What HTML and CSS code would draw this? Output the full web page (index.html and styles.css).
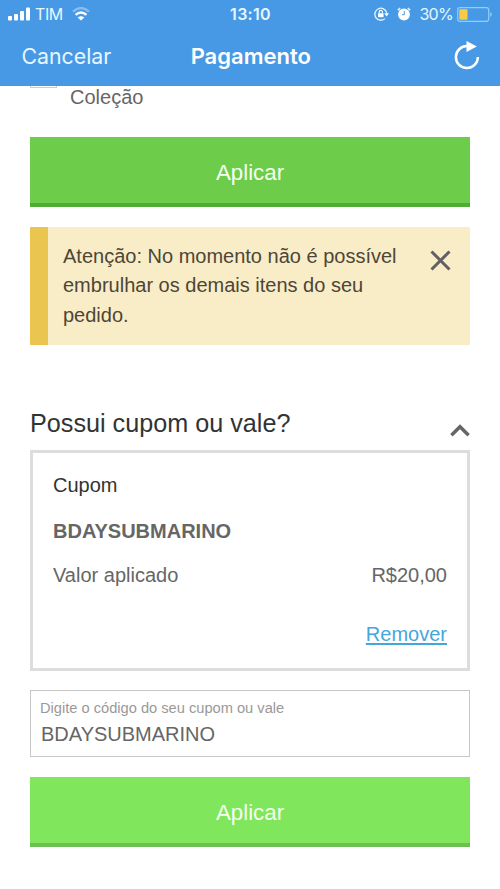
FILE: index.html
```html
<!DOCTYPE html>
<html lang="pt-BR">
<head>
<meta charset="utf-8">
<meta name="viewport" content="width=device-width">
<title>Pagamento</title>
<link rel="stylesheet" href="styles.css">
</head>
<body>
<header class="header">
  <div class="status">
    <div class="status-left">
      <svg class="signal" width="23" height="14" viewBox="0 0 23 14" fill="#fff"><rect x="0" y="9" width="4" height="4.500" rx="1"/><rect x="6" y="7" width="4" height="6.500" rx="1"/><rect x="12" y="4" width="4" height="9.500" rx="1"/><rect x="18" y="0.500" width="4" height="13" rx="1"/></svg>
      <span class="carrier">TIM</span>
      <svg class="wifi" width="18" height="14" viewBox="0 0 18 14" fill="none" stroke="#fff" stroke-width="2.400"><path d="M1 4.600Q9-2.400 17 4.600" opacity=".35"/><path d="M3.600 7.800Q9 3.200 14.400 7.800"/><path d="M9 13.500 5.700 10.400Q9 8 12.300 10.400Z" fill="#fff" stroke="none"/></svg>
    </div>
    <span class="clock">13:10</span>
    <div class="status-right">
      <svg class="lock" width="15" height="14" viewBox="0 0 15 14"><path d="M11 11.600A6 6 0 1 1 12.700 5.800" fill="none" stroke="#e8f7ff" stroke-width="1.300"/><path d="M10.200 6.300H15L12.600 9.500Z" fill="#fff"/><rect x="4" y="6.200" width="5.600" height="4" rx=".6" fill="#fff"/><path d="M5.200 6.500V5a1.600 1.600 0 0 1 3.200 0V6.500" fill="none" stroke="#fff" stroke-width="1.100"/></svg>
      <svg class="alarm" width="14" height="14" viewBox="0 0 14 14"><circle cx="7" cy="7.500" r="5.900" fill="#fff"/><path d="M.8 3.300 3.200 1M13.200 3.300 10.800 1" stroke="#e8f7ff" stroke-width="1.500"/><path d="M7.300 4V7.700H5" fill="none" stroke="#4799e5" stroke-width="1"/></svg>
      <span class="percent">30%</span>
      <svg class="battery" width="36" height="15" viewBox="0 0 36 15"><rect x=".7" y=".7" width="31" height="13.600" rx="2.200" fill="none" stroke="#8fd0f7" stroke-width="1.200"/><rect x="2.300" y="2.300" width="8.200" height="10.400" rx="1" fill="#f8cb45"/><path d="M33.200 5q3.200 2.500 0 5Z" fill="#8fd0f7"/></svg>
    </div>
  </div>
  <nav class="nav">
    <span class="cancel">Cancelar</span>
    <h1 class="title">Pagamento</h1>
    <svg class="reload" width="26" height="30" viewBox="0 0 26 30"><path d="M13.500 5.100A11 11 0 1 0 23.900 16.100" fill="none" stroke="#fff" stroke-width="2.500"/><path d="M12.500 0 22.800 5.600 12.500 11Z" fill="#fff"/></svg>
  </nav>
</header>
<main class="content">
  <div class="option"><span class="checkbox"></span><span class="option-label">Coleção</span></div>
  <button class="apply">Aplicar</button>
  <section class="alert">
    <p class="alert-text">Atenção: No momento não é possível<br>embrulhar os demais itens do seu<br>pedido.</p>
    <svg class="close" width="21" height="21" viewBox="0 0 21 21"><path d="M1.500 1.500 19.500 19.500M19.500 1.500 1.500 19.500" stroke="#626064" stroke-width="3"/></svg>
  </section>
  <div class="section-head">
    <h2 class="section-title">Possui cupom ou vale?</h2>
    <svg class="chevron" width="20" height="13" viewBox="0 0 20 13"><path d="M1.400 11.300 10 2.700 18.600 11.300" fill="none" stroke="#666" stroke-width="3.500"/></svg>
  </div>
  <section class="coupon">
    <div class="coupon-label">Cupom</div>
    <div class="coupon-code">BDAYSUBMARINO</div>
    <div class="coupon-row"><span class="value-label">Valor aplicado</span><span class="value">R$20,00</span></div>
    <a class="remove">Remover</a>
  </section>
  <div class="field">
    <label class="field-label">Digite o código do seu cupom ou vale</label>
    <div class="field-value">BDAYSUBMARINO</div>
  </div>
  <button class="apply apply-active">Aplicar</button>
</main>
</body>
</html>
```
FILE: styles.css
```css
* { box-sizing: border-box; }
body { margin: 0; width: 500px; height: 889px; overflow: hidden; background: #fff; color: #666; font: 20px/24px "Liberation Sans", Arial, sans-serif; }
svg { display: block; flex: none; }
h1, h2, p { margin: 0; font-weight: 400; }
span, .coupon-code, .field-value { white-space: nowrap; }
.header { height: 85.5px; background: #4799e5; color: #fff; font-family: Inter, sans-serif; }
.status { display: grid; grid-template-columns: 1fr auto 1fr; height: 28px; padding: 0 7px 0 8px; align-items: center; font-size: 16px; line-height: 20px; color: #e8f7ff; }
.status-left, .status-right { display: flex; align-items: center; }
.status-right { justify-content: flex-end; }
.carrier { margin-left: 4px; letter-spacing: -.4px; }
.wifi { margin-left: 9px; }
.clock { font-weight: 600; letter-spacing: .3px; }
.alarm { margin-left: 8px; }
.percent { margin: 0 4px 0 8px; letter-spacing: -.7px; }
.nav { display: grid; grid-template-columns: 1fr auto 1fr; align-items: center; height: 55px; padding: 0 20px 0 21.5px; }
.cancel { font-size: 21.3px; color: #e8f7ff; }
.title { font-size: 22px; font-weight: 600; }
.reload { justify-self: end; }
.content { padding: 0 30px; }
.option { display: flex; height: 51.5px; }
.checkbox { width: 27px; height: 2px; border: 1px solid #ccc; border-top: 0; }
.option-label { margin-left: 13px; line-height: 23px; }
.apply { display: block; width: 440px; height: 70px; padding: 5px 0 0; border: 0; border-bottom: 4px solid #51ac35; background: #6dcc49; color: #f4ffef; font: 22.3px/61px "Liberation Sans", Arial, sans-serif; }
.alert { display: flex; justify-content: space-between; height: 118px; margin-top: 19.5px; padding: 15.500px 19px 0 15px; border-left: 18px solid #eac54f; background: #f9edc7; color: #4d4638; }
.alert-text { line-height: 29.3px; white-space: nowrap; }
.close { margin-top: 7.5px; }
.section-head { display: flex; justify-content: space-between; height: 105px; padding-top: 63px; color: #333; }
.section-title { font-size: 25.2px; line-height: 30px; }
.chevron { margin-top: 16px; }
.coupon { display: flex; flex-direction: column; height: 221px; padding: 20.500px 20px 0 20px; border: 3px solid #ddd; }
.coupon-label { color: #333; }
.coupon-code { margin-top: 22px; font-weight: 700; }
.coupon-row { display: flex; justify-content: space-between; margin-top: 20px; }
.remove { align-self: flex-end; margin-top: 34.5px; color: #46a6dc; text-decoration: underline; text-underline-offset: 2px; text-decoration-thickness: 1.5px; }
.field { height: 67px; margin-top: 19.5px; padding: 7px 9px; border: 1px solid #c8c8c8; }
.field-label { display: block; color: #999; font-size: 14.65px; line-height: 20px; }
.field-value { margin: 4px 0 0 1px; }
.apply-active { margin-top: 20px; background: #80e65b; border-bottom-color: #6cbf51; }
```
